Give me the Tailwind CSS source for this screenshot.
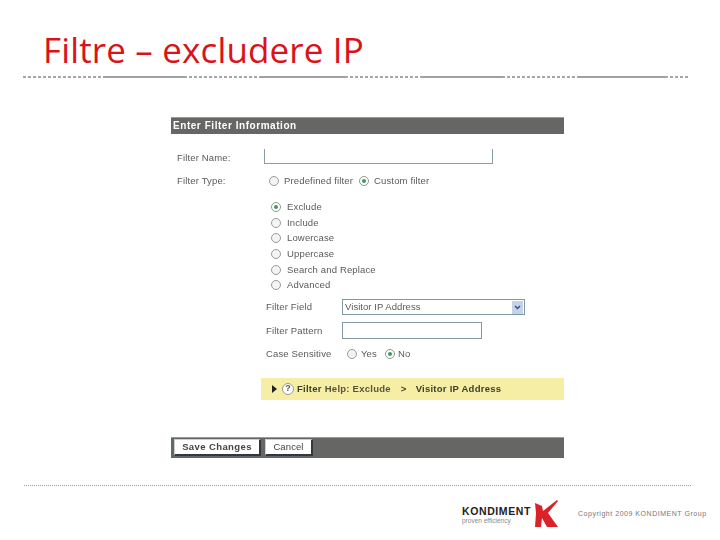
<!DOCTYPE html>
<html><head><meta charset="utf-8"><script src="https://cdn.jsdelivr.net/npm/@tailwindcss/browser@4"></script></head>
<body class="m-0 bg-white">
<div class="w-[720px] h-[540px] overflow-hidden flex flex-col bg-white font-['Liberation_Sans',Arial,sans-serif]">
  <h1 class="ml-[43px] mt-[28px] h-[44px] leading-[44px] text-[35px] font-normal text-[#d9131a] font-['Open_Sans',sans-serif] tracking-[0.15px]">Filtre – excludere IP</h1>
  <div class="ml-[23px] mt-[4px] w-[665px] h-[2px] flex">
    <div class="w-[80px] bg-[repeating-linear-gradient(90deg,#a6a6a6_0_3px,transparent_3px_5px)]"></div>
    <div class="w-[81px] bg-[#a0a0a0]"></div>
    <div class="w-[76px] bg-[repeating-linear-gradient(90deg,#a6a6a6_0_3px,transparent_3px_5px)]"></div>
    <div class="w-[85px] bg-[#a0a0a0]"></div>
    <div class="w-[77px] bg-[repeating-linear-gradient(90deg,#a6a6a6_0_3px,transparent_3px_5px)]"></div>
    <div class="w-[80px] bg-[#a0a0a0]"></div>
    <div class="w-[76px] bg-[repeating-linear-gradient(90deg,#a6a6a6_0_3px,transparent_3px_5px)]"></div>
    <div class="w-[87px] bg-[#a0a0a0]"></div>
    <div class="w-[23px] bg-[repeating-linear-gradient(90deg,#a6a6a6_0_3px,transparent_3px_5px)]"></div>
  </div>

  <div class="ml-[171px] mt-[39px] w-[393px] h-[341px] flex flex-col text-[9.5px] text-[#5a5a5a] tracking-[0.15px] blur-[0.3px]">
    <div class="h-[17px] bg-[#666664] border-t border-[#999] pl-[2px] text-white font-bold text-[10px] tracking-[0.55px] leading-[16px]">Enter Filter Information</div>
    <div class="mt-[15px] h-[15px] flex">
      <div class="w-[93px] pl-[6px] leading-[17px]">Filter Name:</div>
      <div class="w-[229px] h-[15px] border-x border-b border-[#8a9ca5]"></div>
    </div>
    <div class="mt-[10px] h-[14px] flex items-center">
      <div class="w-[98px] pl-[6px]">Filter Type:</div>
      <span class="w-[10px] h-[10px] rounded-full border border-[#9a9a9a] bg-[#f4f4f4] shrink-0"></span>
      <span class="ml-[5px] w-[75px]">Predefined filter</span>
      <span class="w-[10px] h-[10px] rounded-full border border-[#8a9a8a] bg-white shrink-0 flex items-center justify-center"><span class="w-[4px] h-[4px] rounded-full bg-[#3f9a5f]"></span></span>
      <span class="ml-[5px]">Custom filter</span>
    </div>
    <div class="mt-[14px] ml-[100px] flex flex-col gap-[5.7px]">
      <div class="h-[10px] flex items-center gap-[6px]"><span class="w-[10px] h-[10px] rounded-full border border-[#8a9a8a] bg-white flex items-center justify-center"><span class="w-[4px] h-[4px] rounded-full bg-[#3f9a5f]"></span></span>Exclude</div>
      <div class="h-[10px] flex items-center gap-[6px]"><span class="w-[10px] h-[10px] rounded-full border border-[#9a9a9a] bg-[#f4f4f4]"></span>Include</div>
      <div class="h-[10px] flex items-center gap-[6px]"><span class="w-[10px] h-[10px] rounded-full border border-[#9a9a9a] bg-[#f4f4f4]"></span>Lowercase</div>
      <div class="h-[10px] flex items-center gap-[6px]"><span class="w-[10px] h-[10px] rounded-full border border-[#9a9a9a] bg-[#f4f4f4]"></span>Uppercase</div>
      <div class="h-[10px] flex items-center gap-[6px]"><span class="w-[10px] h-[10px] rounded-full border border-[#9a9a9a] bg-[#f4f4f4]"></span>Search and Replace</div>
      <div class="h-[10px] flex items-center gap-[6px]"><span class="w-[10px] h-[10px] rounded-full border border-[#9a9a9a] bg-[#f4f4f4]"></span>Advanced</div>
    </div>
    <div class="mt-[9px] h-[16px] flex items-center">
      <div class="w-[171px] pl-[95px] shrink-0">Filter Field</div>
      <div class="w-[183px] h-[16px] border border-[#7f98a4] flex items-center justify-between pl-[2px] pr-[1px]">
        <span class="tracking-[0.05px]">Visitor IP Address</span>
        <span class="w-[11px] h-[13px] bg-[#c5d3ea] flex items-center justify-center"><svg width="7" height="5" viewBox="0 0 7 5"><path d="M1 1l2.5 2.5L6 1" fill="none" stroke="#3d4f7c" stroke-width="1.5"/></svg></span>
      </div>
    </div>
    <div class="mt-[7px] h-[17px] flex items-center">
      <div class="w-[171px] pl-[95px] shrink-0">Filter Pattern</div>
      <div class="w-[140px] h-[17px] border border-[#7f98a4]"></div>
    </div>
    <div class="mt-[9px] h-[12px] flex items-center">
      <div class="w-[176px] pl-[95px] shrink-0">Case Sensitive</div>
      <span class="w-[10px] h-[10px] rounded-full border border-[#9a9a9a] bg-[#f4f4f4]"></span>
      <span class="ml-[4px] w-[24px]">Yes</span>
      <span class="w-[10px] h-[10px] rounded-full border border-[#8a9a8a] bg-white flex items-center justify-center"><span class="w-[4px] h-[4px] rounded-full bg-[#3f9a5f]"></span></span>
      <span class="ml-[3px]">No</span>
    </div>
    <div class="mt-[18px] ml-[90px] h-[22px] bg-[#f7eea5] flex items-center pl-[11px] text-[#3d3d2c] text-[9.5px] tracking-[0.25px]">
      <span class="w-0 h-0 border-y-[4px] border-y-transparent border-l-[5px] border-l-[#222]"></span>
      <span class="ml-[5px] w-[12px] h-[12px] rounded-full border border-[#999] bg-white flex items-center justify-center text-[9px] font-bold text-[#555]">?</span>
      <span class="ml-[3px] font-bold">Filter</span><span class="ml-[3px] font-bold text-[#55553f]">Help: Exclude</span>
      <span class="ml-[10px] font-bold">&gt;</span>
      <span class="ml-[9px] font-bold">Visitor IP Address</span>
    </div>
    <div class="mt-[37px] h-[22px] bg-[#666664] border-t border-[#999] flex items-center gap-[4px] pl-[3px] text-[#444] text-[9.5px] tracking-[0.4px]">
      <span class="w-[87px] h-[17px] bg-white border-l border-t border-[#c5d0d8] border-r-2 border-b-2 border-r-[#2f3a40] border-b-[#2f3a40] flex items-center justify-center font-bold">Save Changes</span>
      <span class="w-[48px] h-[17px] bg-white border-l border-t border-[#c5d0d8] border-r-2 border-b-2 border-r-[#2f3a40] border-b-[#2f3a40] flex items-center justify-center tracking-[0.1px]">Cancel</span>
    </div>
  </div>

  <div class="ml-[24px] mt-[27px] w-[667px] border-t border-dotted border-[#a0a0a0]"></div>
  <div class="mt-[14px] ml-[462px] flex items-center">
    <div class="w-[71px] flex flex-col mt-[2px]">
      <span class="text-[10.5px] leading-[10px] font-bold text-[#222] tracking-[0.6px]">KONDIMENT</span>
      <span class="text-[6.5px] leading-[9px] text-[#8a8a8a]">proven efficiency</span>
    </div>
    <svg class="shrink-0" width="26" height="28" viewBox="0 0 26 28"><path fill="#d9222a" d="M2 3L9 6L10 11L24 0L25 1L15 13L25 27L14 27L9 18L8 27L2 27L3 13Z"/></svg>
    <span class="ml-[19px] text-[7px] text-[#777] tracking-[0.53px]">Copyright 2009 KONDIMENT Group</span>
  </div>
</div>
</body></html>
